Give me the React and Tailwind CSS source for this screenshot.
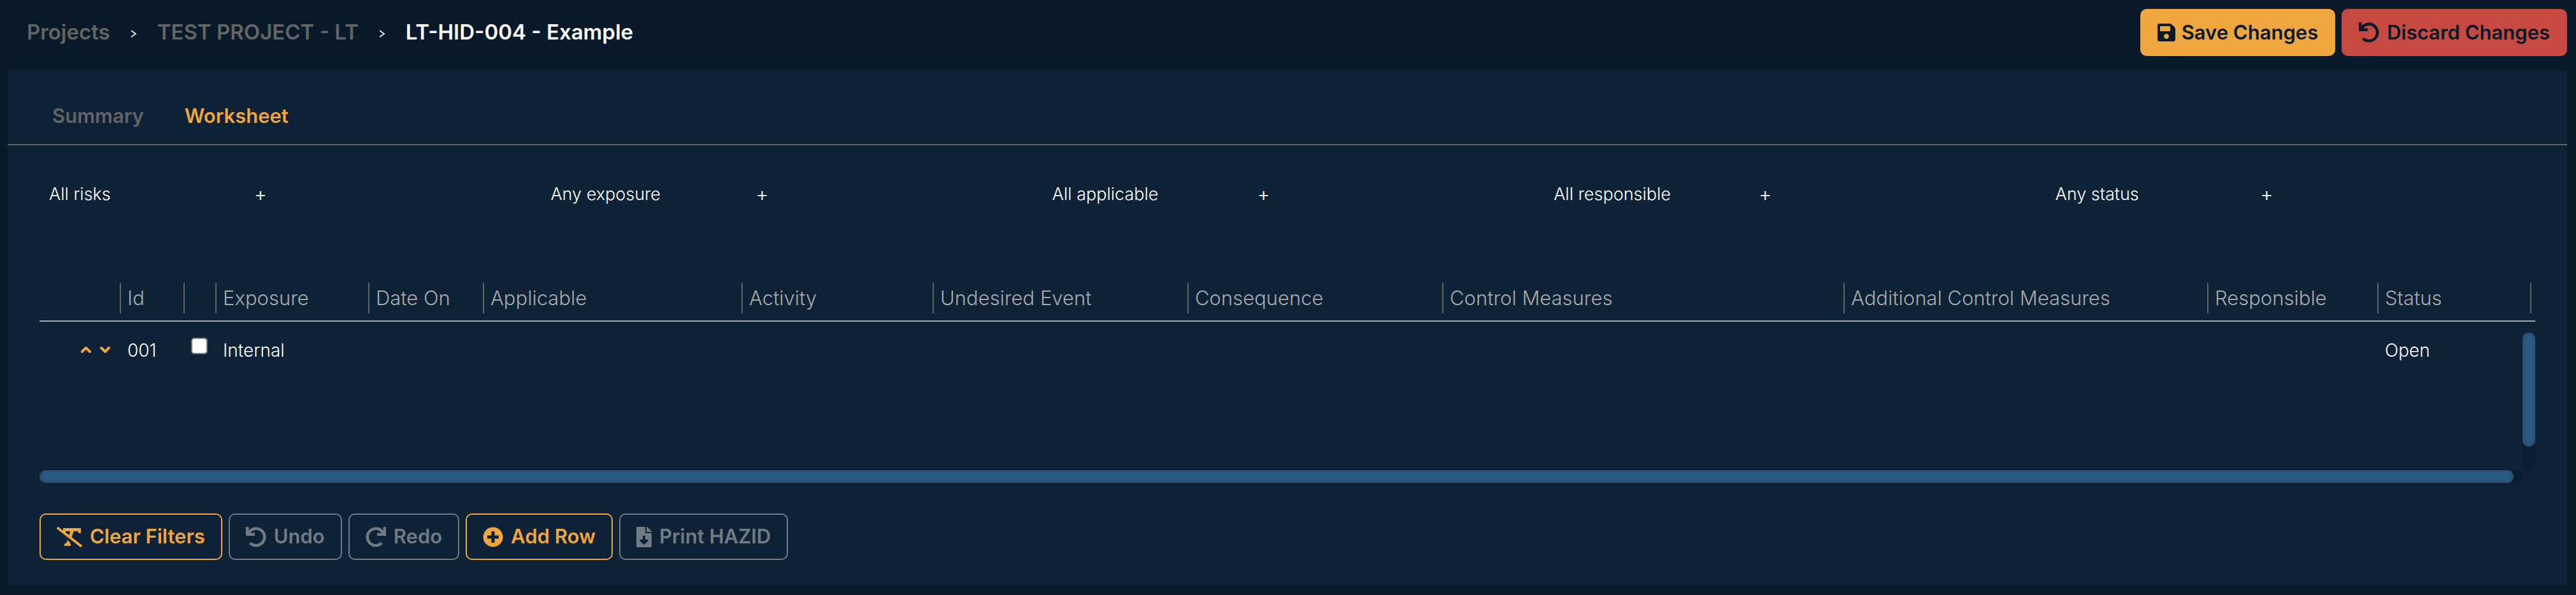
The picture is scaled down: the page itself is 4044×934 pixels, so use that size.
import React from 'react';
import { FaSave, FaUndo, FaRedo, FaRemoveFormat, FaPlusCircle, FaFileDownload } from 'react-icons/fa';

const filters = ['All risks', 'Any exposure', 'All applicable', 'All responsible', 'Any status'];

// Column widths are shares of the table width
const columns = [
  { key: 'move', label: '', width: 128 },
  { key: 'id', label: 'Id', width: 100 },
  { key: 'selected', label: '', width: 50 },
  { key: 'exposure', label: 'Exposure', width: 240 },
  { key: 'dateOn', label: 'Date On', width: 180 },
  { key: 'applicable', label: 'Applicable', width: 406 },
  { key: 'activity', label: 'Activity', width: 300 },
  { key: 'event', label: 'Undesired Event', width: 400 },
  { key: 'consequence', label: 'Consequence', width: 400 },
  { key: 'control', label: 'Control Measures', width: 630 },
  { key: 'additional', label: 'Additional Control Measures', width: 571 },
  { key: 'responsible', label: 'Responsible', width: 267 },
  { key: 'status', label: 'Status', width: 246 },
];

const totalWidth = columns.reduce((sum, column) => sum + column.width, 0);

const rows = [{ id: '001', exposure: 'Internal', status: 'Open' }];

const Chevron = ({ d }) => (
  <svg viewBox="0 0 18 12" className="h-3 w-[18px]" fill="none" stroke="currentColor" strokeWidth="4" strokeLinecap="round" strokeLinejoin="round">
    <path d={d} />
  </svg>
);

const Separator = () => (
  <svg viewBox="0 0 10 14" className="mt-1 h-[14px] w-[10px] text-[#e0e0e0]" fill="none" stroke="currentColor" strokeWidth="2">
    <path d="M1 2l7 5-7 5" />
  </svg>
);

const ToolButton = ({ icon: Icon, iconClass = 'w-8', children, disabled }) => (
  <button
    type="button"
    disabled={disabled}
    className={`flex h-[73px] items-center gap-3 rounded-[10px] border-2 px-[25px] text-[31px] font-semibold ${
      disabled ? 'border-[#737a82] text-[#737a82]' : 'border-[#f0a63f] text-[#f0a63f]'
    }`}
  >
    <Icon className={`h-8 ${iconClass}`} />
    {children}
  </button>
);

const Header = () => (
  <header className="flex h-[110px] items-start justify-between pl-[42px] pr-[14px] pt-[14px]">
    <nav aria-label="Breadcrumb" className="flex h-[74px] items-center gap-8 text-[33px] font-semibold">
      <a href="#projects" className="text-[#646464]">Projects</a>
      <Separator />
      <a href="#project" className="text-[#646464]">TEST PROJECT - LT</a>
      <Separator />
      <span className="text-white">LT-HID-004 - Example</span>
    </nav>
    <div className="flex gap-[10px] text-[31px] font-semibold text-[#081a29]">
      <button type="button" className="flex h-[74px] items-center gap-[10px] rounded-[10px] bg-[#f0a63f] px-[27px]">
        <FaSave className="h-8 w-7" />
        Save Changes
      </button>
      <button type="button" className="flex h-[74px] items-center gap-3 rounded-[10px] bg-[#c64a42] px-[27px]">
        <FaUndo className="size-8" />
        Discard Changes
      </button>
    </div>
  </header>
);

const WorksheetTable = () => (
  <table className="w-full table-fixed border-collapse text-left">
    <colgroup>
      {columns.map((column) => (
        <col key={column.key} style={{ width: `${(column.width / totalWidth) * 100}%` }} />
      ))}
    </colgroup>
    <thead className="border-b-2 border-[#a9aaac] text-[31px] text-[#a9a9a9]">
      <tr>
        {columns.map((column) => (
          <th key={column.key} className="p-0 pb-[11px] font-light last:pr-[6px]">
            <div className="flex h-12 items-center border-r-2 border-[#646464] pl-[10px] whitespace-nowrap">
              {column.label}
            </div>
          </th>
        ))}
      </tr>
    </thead>
    <tbody className="text-[28px] text-white">
      {rows.map((row) => (
        <tr key={row.id} className="align-top">
          <td className="px-0 pt-[38px]">
            <div className="flex justify-end gap-3 pr-4 text-[#f0a63f]">
              <button type="button" aria-label="Move up" className="block"><Chevron d="M3 9l6-6 6 6" /></button>
              <button type="button" aria-label="Move down" className="block"><Chevron d="M3 3l6 6 6-6" /></button>
            </div>
          </td>
          <td className="pl-[10px] pt-6 font-light">{row.id}</td>
          <td className="pl-[10px] pt-[25px]">
            <input
              type="checkbox"
              aria-label={`Select ${row.id}`}
              className="block size-[26px] appearance-none rounded-[5px] border-2 border-[#767676] bg-white"
            />
          </td>
          <td className="pl-[10px] pt-6 font-light">{row.exposure}</td>
          <td colSpan={8} />
          <td className="pl-[10px] pt-6 font-light">{row.status}</td>
        </tr>
      ))}
    </tbody>
  </table>
);

const App = () => {
  return (
    <div className="min-h-screen bg-[#081a29] pb-[15px] font-['Inter','Liberation_Sans',sans-serif]">
      <Header />
      <main className="ml-3 mr-[14px] bg-[#0d2236] pb-10">
        <div role="tablist" className="flex h-[118px] items-center gap-16 border-b-2 border-[#646464] px-[70px] pt-7 text-[31px] font-semibold">
          <button type="button" role="tab" aria-selected="false" className="text-[#646464]">Summary</button>
          <button type="button" role="tab" aria-selected="true" className="text-[#f0a63f]">Worksheet</button>
        </div>

        <div className="grid h-[216px] grid-cols-5 pl-[65px] pr-4 pt-[57px] text-[27px] font-light text-white">
          {filters.map((filter) => (
            <div key={filter} className="flex h-10 w-[342px] items-center justify-between">
              <span>{filter}</span>
              <button type="button" aria-label={`Expand ${filter}`} className="text-[31px]">+</button>
            </div>
          ))}
        </div>

        <section className="mx-[50px]">
          <div className="relative min-h-[294px]">
            <WorksheetTable />
            {/* Vertical scrollbar */}
            <div className="absolute top-[78px] right-0 bottom-0 w-5 rounded-full bg-[#0c2034] shadow-[inset_0_0_8px_#0b1c2a]">
              <div className="h-[83%] rounded-full bg-[#2c5c86] shadow-[inset_0_0_10px_#2a4661]" />
            </div>
          </div>
          {/* Horizontal scrollbar */}
          <div className="mr-5 h-5 rounded-full bg-[#0c2034] shadow-[inset_0_0_8px_#0b1c2a]">
            <div className="mr-[14px] h-5 rounded-full bg-[#2c5c86] shadow-[inset_0_0_10px_#2a4661]" />
          </div>
        </section>

        <div className="ml-[50px] mt-12 flex gap-[10px]">
          <ToolButton icon={FaRemoveFormat} iconClass="w-10">Clear Filters</ToolButton>
          <ToolButton icon={FaUndo} disabled>Undo</ToolButton>
          <ToolButton icon={FaRedo} disabled>Redo</ToolButton>
          <ToolButton icon={FaPlusCircle}>Add Row</ToolButton>
          <ToolButton icon={FaFileDownload} iconClass="w-6" disabled>Print HAZID</ToolButton>
        </div>
      </main>
    </div>
  );
};

export default App;
